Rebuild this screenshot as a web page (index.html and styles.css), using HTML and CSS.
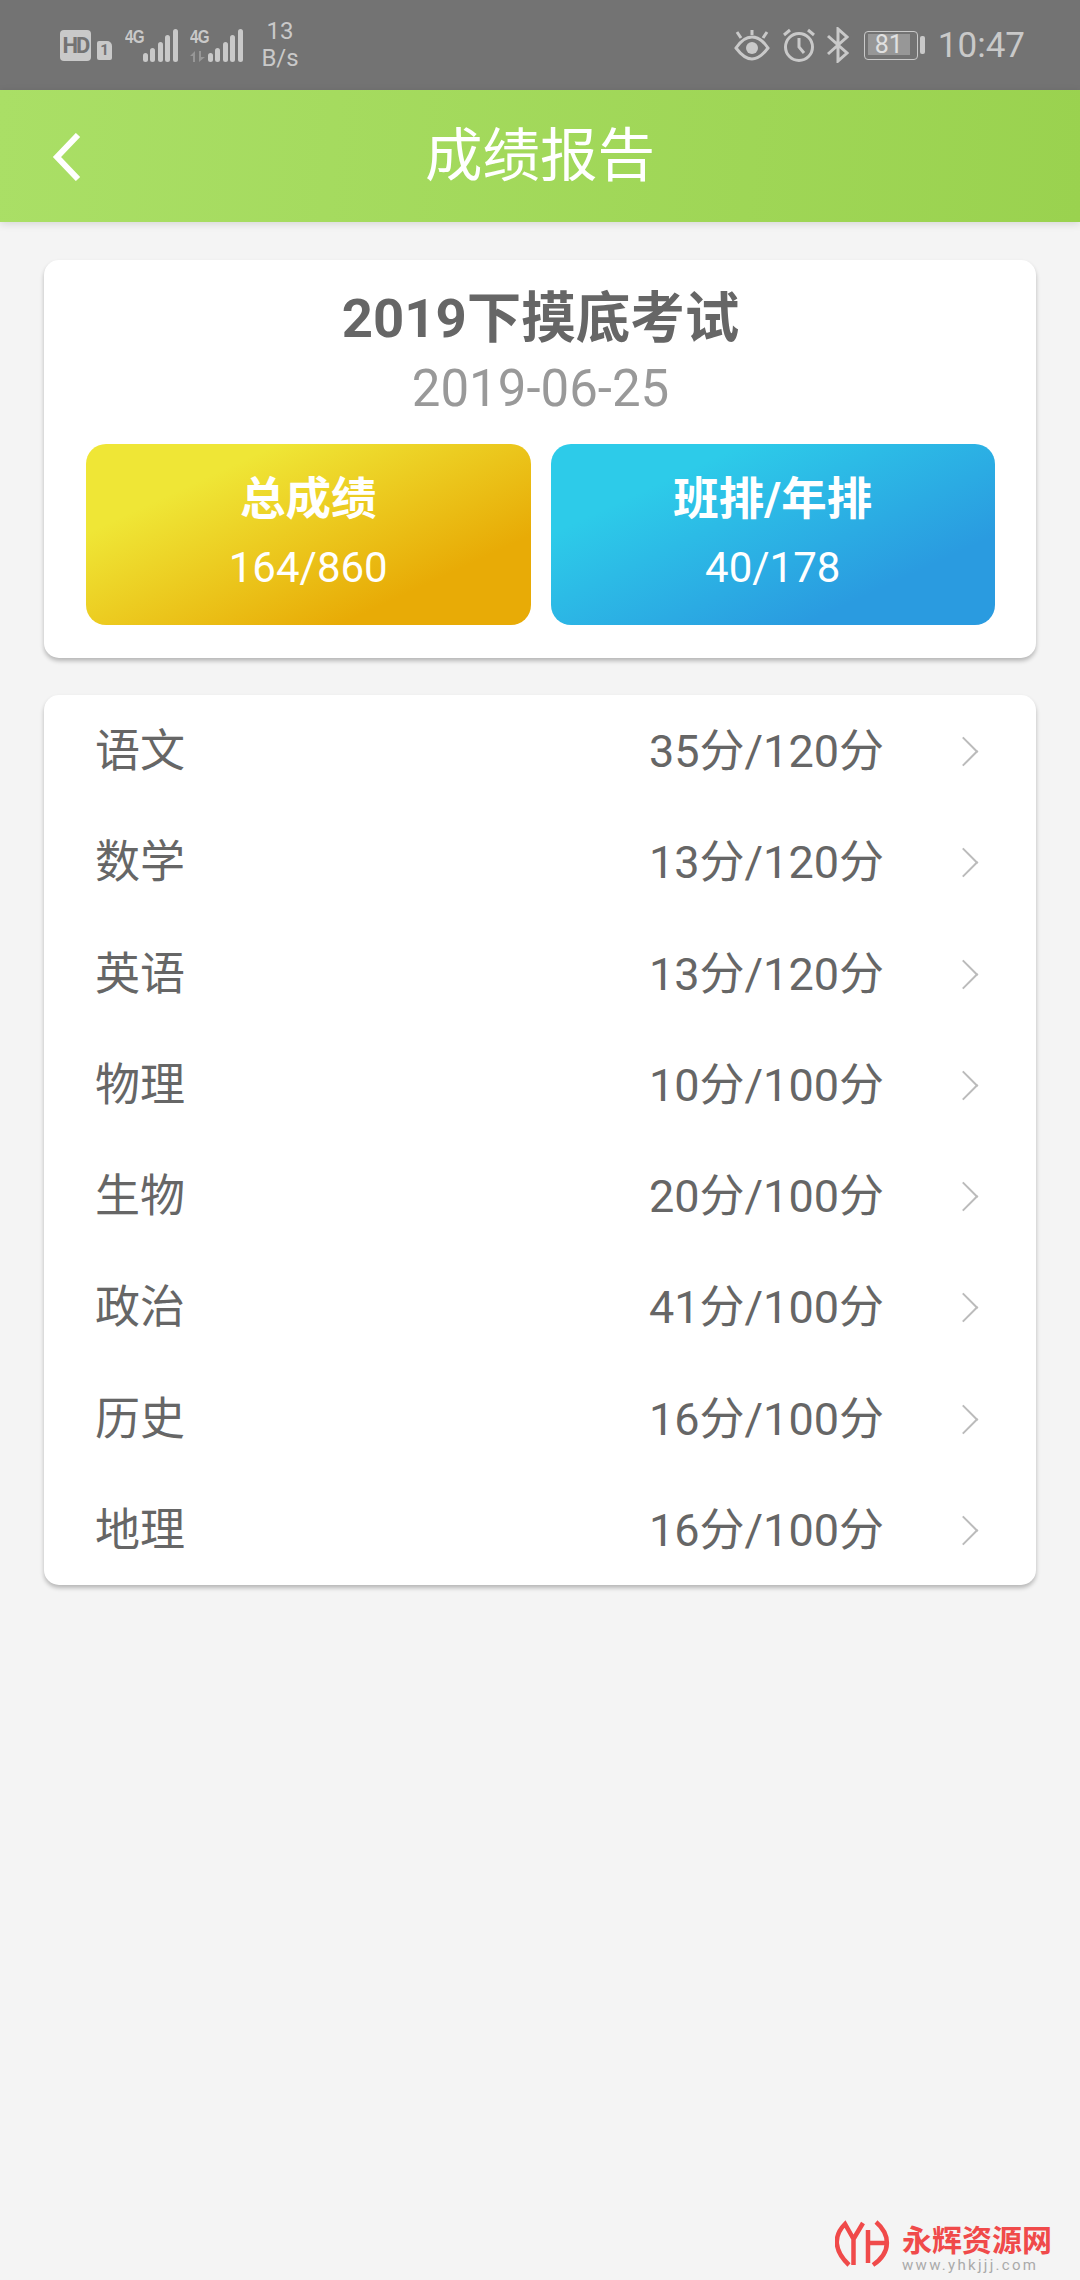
FILE: index.html
```html
<!DOCTYPE html>
<html lang="zh-CN">
<head>
    <meta charset="UTF-8">
    <title>成绩报告</title>
    <link rel="stylesheet" href="styles.css">
</head>
<body>
<div class="status-bar">
    <div class="status-left">
        <span class="hd">HD</span>
        <span class="sim">1</span>
        <div class="signal">
            <span class="net">4G</span>
            <svg class="bars" width="35" height="33" viewBox="0 0 35 33">
                <rect x="0" y="24" width="5" height="9" rx="2.5"/>
                <rect x="7" y="19" width="5" height="14" rx="2.5"/>
                <rect x="15" y="13" width="5" height="20" rx="2.5"/>
                <rect x="22" y="6" width="5" height="27" rx="2.5"/>
                <rect x="30" y="0" width="5" height="33" rx="2.5"/>
            </svg>
        </div>
        <div class="signal signal-second">
            <span class="net">4G</span>
            <svg class="arrows" width="16" height="11" viewBox="0 0 16 11">
                <path d="M5 0v11H3V5H0zM9 0h2v6h4l-6 5z"/>
            </svg>
            <svg class="bars" width="35" height="33" viewBox="0 0 35 33">
                <rect x="0" y="24" width="5" height="9" rx="2.5"/>
                <rect x="7" y="19" width="5" height="14" rx="2.5"/>
                <rect x="15" y="13" width="5" height="20" rx="2.5"/>
                <rect x="22" y="6" width="5" height="27" rx="2.5"/>
                <rect x="30" y="0" width="5" height="33" rx="2.5"/>
            </svg>
        </div>
        <div class="speed"><span>13</span><span>B/s</span></div>
    </div>
    <div class="status-right">
        <svg width="36" height="32" viewBox="0 0 36 32" fill="none" stroke="#c9c9c9" stroke-width="3">
            <path d="M2 19C8 10 13 8 18 8s10 2 16 11c-6 8-11 11-16 11S8 27 2 19z"/>
            <circle cx="18" cy="19" r="6" fill="#c9c9c9" stroke="none"/>
            <path d="M18 1v5M3 3l4 6M33 3l-4 6"/>
        </svg>
        <svg class="alarm" width="32" height="34" viewBox="0 0 32 34" fill="none" stroke="#c9c9c9" stroke-width="3">
            <circle cx="16" cy="19" r="13.5"/>
            <path d="M16 10v9l5 6M1 7l6-5M31 7l-6-5"/>
        </svg>
        <svg class="bt" width="22" height="36" viewBox="0 0 22 36" fill="none" stroke="#c9c9c9" stroke-width="3">
            <path d="M1 9l19 17-9 8V2l9 8L1 27"/>
        </svg>
        <div class="battery">
            <div class="battery-body"><span class="battery-level">81</span></div>
            <div class="battery-nub"></div>
        </div>
        <span class="time">10:47</span>
    </div>
</div>

<div class="header">
    <svg class="back" width="30" height="48" viewBox="0 0 30 48" fill="none" stroke="#fff" stroke-width="6">
        <path d="M26 2L5 24l21 22"/>
    </svg>
    <span class="header-title">成绩报告</span>
</div>

<div class="content">
    <div class="card summary">
        <div class="exam-name">2019下摸底考试</div>
        <div class="exam-date">2019-06-25</div>
        <div class="stats">
            <div class="stat stat-yellow">
                <div class="stat-title">总成绩</div>
                <div class="stat-num">164/860</div>
            </div>
            <div class="stat stat-blue">
                <div class="stat-title">班排/年排</div>
                <div class="stat-num">40/178</div>
            </div>
        </div>
    </div>

    <ul class="card subjects">
        <li><span class="name">语文</span><span class="score">35分/120分</span><i class="arrow"></i></li>
        <li><span class="name">数学</span><span class="score">13分/120分</span><i class="arrow"></i></li>
        <li><span class="name">英语</span><span class="score">13分/120分</span><i class="arrow"></i></li>
        <li><span class="name">物理</span><span class="score">10分/100分</span><i class="arrow"></i></li>
        <li><span class="name">生物</span><span class="score">20分/100分</span><i class="arrow"></i></li>
        <li><span class="name">政治</span><span class="score">41分/100分</span><i class="arrow"></i></li>
        <li><span class="name">历史</span><span class="score">16分/100分</span><i class="arrow"></i></li>
        <li><span class="name">地理</span><span class="score">16分/100分</span><i class="arrow"></i></li>
    </ul>
</div>

<!--水印-->
<div class="watermark">
    <svg width="56" height="50" viewBox="0 0 56 50" fill="none" stroke="#f04a4a" stroke-width="4.5">
        <path d="M14 45C-1 31-2 16 10 4l8.5 15v26M28 3l-9.5 16M33 10v33M33 23h17M41 2c14 12 16 30-3 43"/>
    </svg>
    <div class="mark-text">
        <div class="mark-name">永辉资源网</div>
        <div class="mark-url">www.yhkjjj.com</div>
    </div>
</div>
</body>
</html>
```

FILE: styles.css
```css
* {
    margin: 0;
    padding: 0;
    box-sizing: border-box;
}

ul {
    list-style: none;
}

body {
    width: 1080px;
    height: 2280px;
    position: relative;
    overflow: hidden;
    background-color: #f4f4f4;
    font-family: Roboto, "Noto Sans CJK SC", sans-serif;
}

.status-bar {
    height: 90px;
    padding: 0 55px 0 60px;
    display: flex;
    justify-content: space-between;
    align-items: center;
    background-color: #737373;
    color: #c9c9c9;
}

.status-left,
.status-right {
    display: flex;
    align-items: center;
}

.hd {
    width: 31px;
    height: 31px;
    border-radius: 4px;
    background-color: #c9c9c9;
    color: #737373;
    font-size: 22px;
    font-weight: 700;
    line-height: 31px;
    letter-spacing: -2px;
    text-align: center;
}

.sim {
    width: 15px;
    height: 19px;
    margin: 11px 0 0 6px;
    border-radius: 2px 5px 2px 2px;
    background-color: #c9c9c9;
    color: #737373;
    font-size: 15px;
    font-weight: 700;
    line-height: 19px;
    text-align: center;
}

.signal {
    position: relative;
    width: 53px;
    height: 33px;
    margin-left: 13px;
    display: flex;
    justify-content: flex-end;
}

.signal-second {
    margin-left: 12px;
}

.net {
    position: absolute;
    left: 0;
    top: -2px;
    font-family: "Liberation Sans", sans-serif;
    font-size: 19px;
    font-weight: 700;
    line-height: 20px;
    letter-spacing: -1px;
    transform: scaleX(0.8);
    transform-origin: left top;
}

.arrows {
    position: absolute;
    left: 0;
    bottom: 0;
    fill: #979797;
}

.bars {
    fill: #c9c9c9;
}

.speed {
    width: 36px;
    margin-left: 19px;
    display: flex;
    flex-direction: column;
    align-items: center;
    font-size: 24px;
    line-height: 27px;
}

.status-right svg {
    display: block;
}

.alarm {
    margin-left: 13px;
}

.bt {
    margin-left: 12px;
}

.battery {
    margin-left: 15px;
    display: flex;
    align-items: center;
}

.battery-body {
    width: 54px;
    height: 29px;
    padding: 2.5px 3px;
    border: 1.5px solid #c9c9c9;
    border-radius: 4px;
}

.battery-level {
    display: block;
    width: 42px;
    height: 21px;
    background-color: #979797;
    color: #e0e0e0;
    font-size: 25px;
    line-height: 21px;
    text-align: center;
}

.battery-nub {
    width: 5px;
    height: 18px;
    margin-left: 2px;
    border-radius: 2px;
    background-color: #c9c9c9;
}

.time {
    margin: 2px 0 0 13px;
    font-size: 35px;
    line-height: 40px;
}

.header {
    position: relative;
    height: 132px;
    padding-bottom: 10px;
    display: flex;
    align-items: center;
    justify-content: center;
    background: linear-gradient(95deg, #aadf66, #9ad24f);
    box-shadow: 0 2px 8px rgba(0, 0, 0, 0.12);
}

.back {
    position: absolute;
    left: 52px;
    top: 43px;
}

.header-title {
    color: #fff;
    font-size: 57.5px;
}

.content {
    padding: 38px 44px 0;
}

.card {
    background-color: #fff;
    border-radius: 15px;
    box-shadow: 0 3px 4px rgba(0, 0, 0, 0.25);
}

.summary {
    padding: 28px 41px 33px 42px;
    text-align: center;
}

.exam-name {
    color: #666;
    font-size: 54.5px;
    font-weight: 700;
    line-height: 60px;
}

.exam-date {
    margin-top: 11px;
    color: #999;
    font-size: 51px;
    line-height: 60px;
}

.stats {
    margin-top: 25px;
    display: flex;
    gap: 20px;
}

.stat {
    flex: 1;
    height: 181px;
    padding-top: 28px;
    border-radius: 20px;
    color: #fff;
}

.stat-yellow {
    background: linear-gradient(155deg, #efe636 23%, #e8ab06 77%);
}

.stat-blue {
    background: linear-gradient(155deg, #2dcbe9 23%, #2a9be0 77%);
}

.stat-title {
    font-size: 45.5px;
    font-weight: 700;
    line-height: 56px;
}

.stat-num {
    margin-top: 12px;
    font-size: 42px;
    line-height: 56px;
}

.subjects {
    margin-top: 37px;
    padding: 0 62px 0 51px;
}

.subjects li {
    height: 111.25px;
    display: flex;
    align-items: center;
    color: #666;
    font-size: 45px;
}

.subjects .name {
    flex: 1;
    margin-bottom: 6px;
}

.subjects .score {
    margin-bottom: 6px;
}

.arrow {
    width: 21px;
    height: 21px;
    margin: 2px 0 0 69px;
    border-top: 2.5px solid #bbb;
    border-right: 2.5px solid #bbb;
    transform: rotate(45deg);
}

.watermark {
    position: absolute;
    left: 835px;
    top: 2220px;
    display: flex;
    gap: 11px;
}

.mark-text {
    padding-top: 4px;
}

.mark-name {
    color: #f04a4a;
    font-size: 30px;
    font-weight: 700;
    line-height: 34px;
}

.mark-url {
    color: #aaa;
    font-size: 15px;
    line-height: 14px;
    letter-spacing: 2.3px;
}
```
